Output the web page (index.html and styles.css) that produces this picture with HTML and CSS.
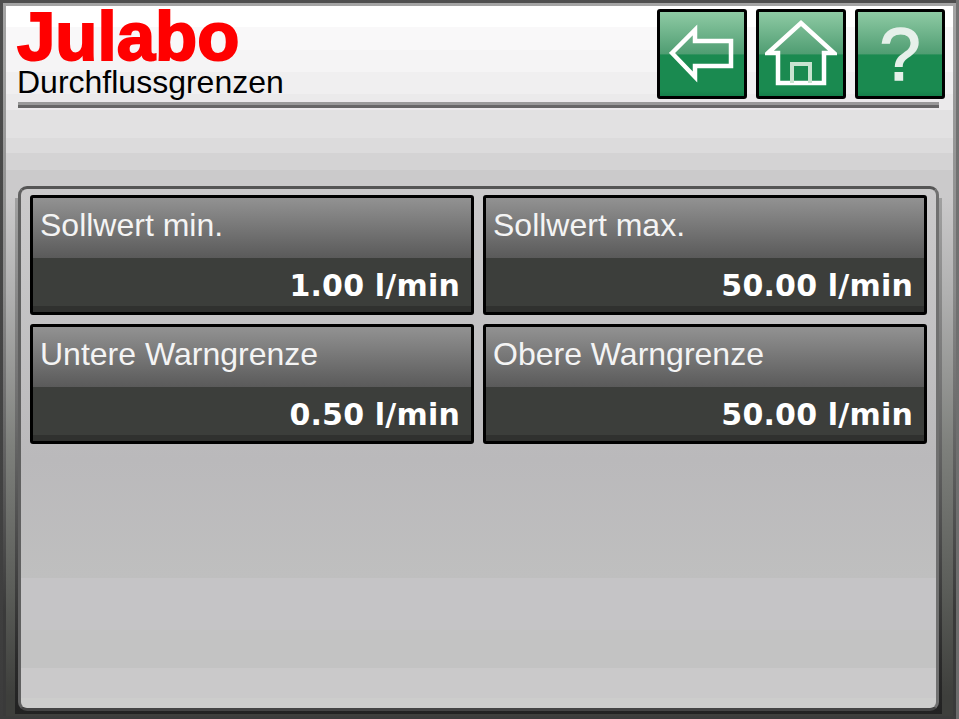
FILE: index.html
```html
<!DOCTYPE html>
<html lang="de">
<head>
  <meta charset="UTF-8" />
  <meta name="viewport" content="width=device-width, initial-scale=1.0" />
  <title>Durchflussgrenzen - Julabo</title>
  <link rel="stylesheet" href="styles.css">
</head>
<body>
  <div class="screen">
    <div class="display">

      <!-- Kopfzeile -->
      <div class="header">
        <div class="branding">
          <div class="logo">Julabo</div>
          <div class="page-title">Durchflussgrenzen</div>
        </div>
        <div class="nav">
          <button class="nav-btn" aria-label="Zurück">
            <svg width="66" height="60" viewBox="0 0 66 60" fill="none" stroke="#fff" stroke-width="4.5">
              <path d="M3 29 L26 6 V17 H62 V42 H26 V53 Z"/>
            </svg>
          </button>
          <button class="nav-btn" aria-label="Start">
            <svg width="72" height="70" viewBox="0 0 72 70" fill="none" stroke="#fff" stroke-width="4.5">
              <path d="M3 34 L36 4 L69 34 H59 V64 H13 V34 Z"/>
              <path d="M27 64 V45 H45 V64" stroke-width="4" stroke="#c8e4d0"/>
            </svg>
          </button>
          <button class="nav-btn help" aria-label="Hilfe">?</button>
        </div>
      </div>
      <div class="rule"></div>

      <!-- Werte -->
      <div class="panel-wrap">
        <div class="panel">
          <div class="card">
            <div class="card-label">Sollwert min.</div>
            <div class="card-value">1.00 l/min</div>
          </div>
          <div class="card">
            <div class="card-label">Sollwert max.</div>
            <div class="card-value">50.00 l/min</div>
          </div>
          <div class="card">
            <div class="card-label">Untere Warngrenze</div>
            <div class="card-value">0.50 l/min</div>
          </div>
          <div class="card">
            <div class="card-label">Obere Warngrenze</div>
            <div class="card-value">50.00 l/min</div>
          </div>
        </div>
      </div>

    </div>
  </div>
</body>
</html>
```

FILE: styles.css
```css
html, body {
  margin: 0;
  padding: 0;
  background: #3a3a3a;
}

.screen {
  box-sizing: border-box;
  width: 959px;
  height: 719px;
  padding: 3px;
  background:
    linear-gradient(to right, transparent 956px, rgba(140, 140, 140, 0.6) 956px),
    linear-gradient(#4e4e4e, #3c3c3c);
  overflow: hidden;
}

.display {
  box-sizing: border-box;
  height: 713px;
  border: 3px solid;
  border-image: linear-gradient(#a4a4a4, #8a8a8a 40%, #3a3a3a 85%) 1;
  border-bottom: 0;
  background:
    linear-gradient(
      #ffffff 0 21px, #f9f8f9 21px 44px, #f5f4f5 44px 66px, #f0eff0 66px 88px,
      #ebeaeb 88px 104px, #e2e1e2 104px 132px, #dcdbdc 132px 147px, #d4d3d4 147px 164px,
      #cbcacb 164px 190px, #b0b0b0 290px, #7e807c 440px, #5c5e5a 580px, #3e3f3c 690px
    );
  font-family: "DejaVu Sans", sans-serif;
}

.header {
  display: flex;
  justify-content: space-between;
  height: 89px;
  padding: 3px 8px 0 11px;
}

.logo {
  height: 50px;
  margin-top: 3px;
  color: #ff0000;
  font-family: "Liberation Sans", sans-serif;
  font-size: 69px;
  font-weight: bold;
  line-height: 50px;
  -webkit-text-stroke: 2px #ff0000;
}

.page-title {
  margin-top: 2px;
  color: #000;
  font-family: "Liberation Sans", sans-serif;
  font-size: 32px;
  line-height: 36px;
}

.nav {
  display: flex;
  gap: 9px;
}

.nav-btn {
  display: flex;
  align-items: center;
  justify-content: center;
  box-sizing: border-box;
  width: 90px;
  height: 90px;
  padding: 0;
  border: 3px solid #000;
  border-radius: 3px;
  background: linear-gradient(#8ecaa4, #4f9d72 50%, #1a8a50 51%, #1a8a50 94%, #14804a);
  cursor: pointer;
}

.help {
  padding-top: 2px;
  color: #e6f0ea;
  font-family: "Liberation Sans", sans-serif;
  font-size: 74px;
  line-height: 1;
  -webkit-text-stroke: 1.5px #e6f0ea;
}

.rule {
  height: 6px;
  margin: 4px 14px 0 12px;
  background: linear-gradient(#999 50%, #666 50%);
}

.panel-wrap {
  box-sizing: border-box;
  height: 528px;
  margin: 78px 11px 0 9px;
  padding: 0 3px 3px;
  background: linear-gradient(transparent 12px, #a0a0a0 12px, #6a6a6a 45%, #2a2a2a 90%, #222);
}

.panel {
  box-sizing: border-box;
  display: grid;
  grid-template-columns: 444px 444px;
  grid-auto-rows: 120px;
  column-gap: 9px;
  row-gap: 9px;
  align-content: start;
  height: 525px;
  padding: 6px 9px;
  border: 3px solid #606060;
  border-top-color: #555;
  border-right-color: #707070;
  border-bottom-color: #444;
  border-radius: 9px;
  background:
    linear-gradient(
      #cbcacb, #bab9bb 270px, #bfbfbf 389px, #c5c4c6 389px 441px,
      #c3c3c3 441px 479px, #cac9ca 479px 509px, #cdcdcc 509px
    );
}

.card {
  box-sizing: border-box;
  display: flex;
  flex-direction: column;
  border: 3px solid #000;
  border-radius: 3px;
  background: linear-gradient(#3c3e3b 0 108px, #30312f 108px);
}

.card-label {
  box-sizing: border-box;
  height: 60px;
  padding: 9px 7px 0;
  color: #f4f4f4;
  font-family: "Liberation Sans", sans-serif;
  font-size: 32px;
  line-height: 36px;
  background: linear-gradient(#929292, #5a5a5a);
}

.card-value {
  padding: 10px 11px 0 0;
  color: #fff;
  font-size: 30px;
  font-weight: bold;
  letter-spacing: 0.2px;
  line-height: 36px;
  text-align: right;
}
```
